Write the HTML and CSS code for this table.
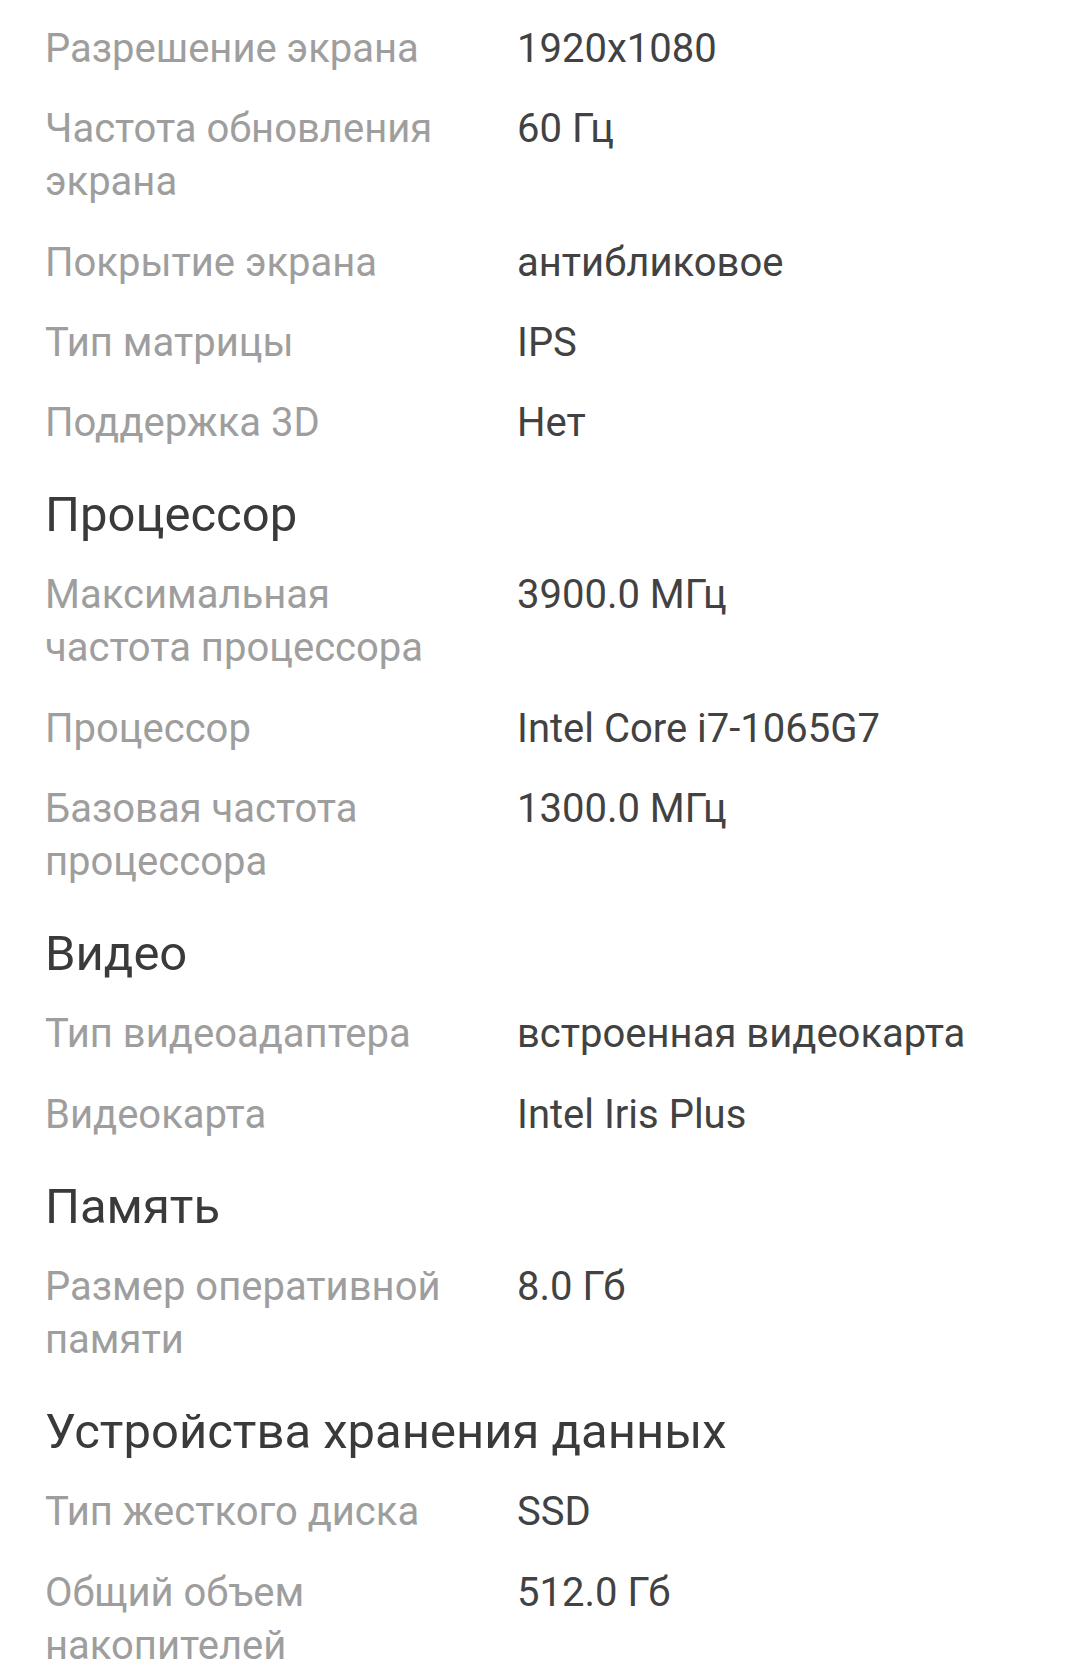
FILE: index.html
```html
<!DOCTYPE html>
<html lang="ru">
<head>
<meta charset="utf-8">
<link rel="stylesheet" href="styles.css">
</head>
<body>
<div class="specs">
  <div class="row"><div class="label">Разрешение экрана</div><div class="value">1920x1080</div></div>
  <div class="row"><div class="label">Частота обновления экрана</div><div class="value">60 Гц</div></div>
  <div class="row"><div class="label">Покрытие экрана</div><div class="value">антибликовое</div></div>
  <div class="row"><div class="label">Тип матрицы</div><div class="value">IPS</div></div>
  <div class="row"><div class="label">Поддержка 3D</div><div class="value">Нет</div></div>

  <h2 class="heading">Процессор</h2>
  <div class="row"><div class="label">Максимальная частота процессора</div><div class="value">3900.0 МГц</div></div>
  <div class="row"><div class="label">Процессор</div><div class="value">Intel Core i7-1065G7</div></div>
  <div class="row"><div class="label">Базовая частота процессора</div><div class="value">1300.0 МГц</div></div>

  <h2 class="heading">Видео</h2>
  <div class="row"><div class="label">Тип видеоадаптера</div><div class="value">встроенная видеокарта</div></div>
  <div class="row"><div class="label">Видеокарта</div><div class="value">Intel Iris Plus</div></div>

  <h2 class="heading">Память</h2>
  <div class="row"><div class="label">Размер оперативной памяти</div><div class="value">8.0 Гб</div></div>

  <h2 class="heading">Устройства хранения данных</h2>
  <div class="row"><div class="label">Тип жесткого диска</div><div class="value">SSD</div></div>
  <div class="row"><div class="label">Общий объем накопителей</div><div class="value">512.0 Гб</div></div>
</div>
</body>
</html>
```

FILE: styles.css
```css
html, body {
  margin: 0;
  padding: 0;
  background: #ffffff;
}
body {
  font-family: Roboto, "Noto Sans", sans-serif;
}
.specs {
  padding: 22px 45px 0 45px;
}
.row {
  display: grid;
  grid-template-columns: 472px 1fr;
  padding-bottom: 27.3px;
  font-size: 40px;
  line-height: 53px;
}
.label {
  color: #9e9e9e;
  padding-right: 32px;
}
.value {
  color: #424242;
}
.heading {
  margin: 9px 0 23px 0;
  font-size: 49px;
  line-height: 60px;
  font-weight: 400;
  color: #3a3a3a;
}
```
